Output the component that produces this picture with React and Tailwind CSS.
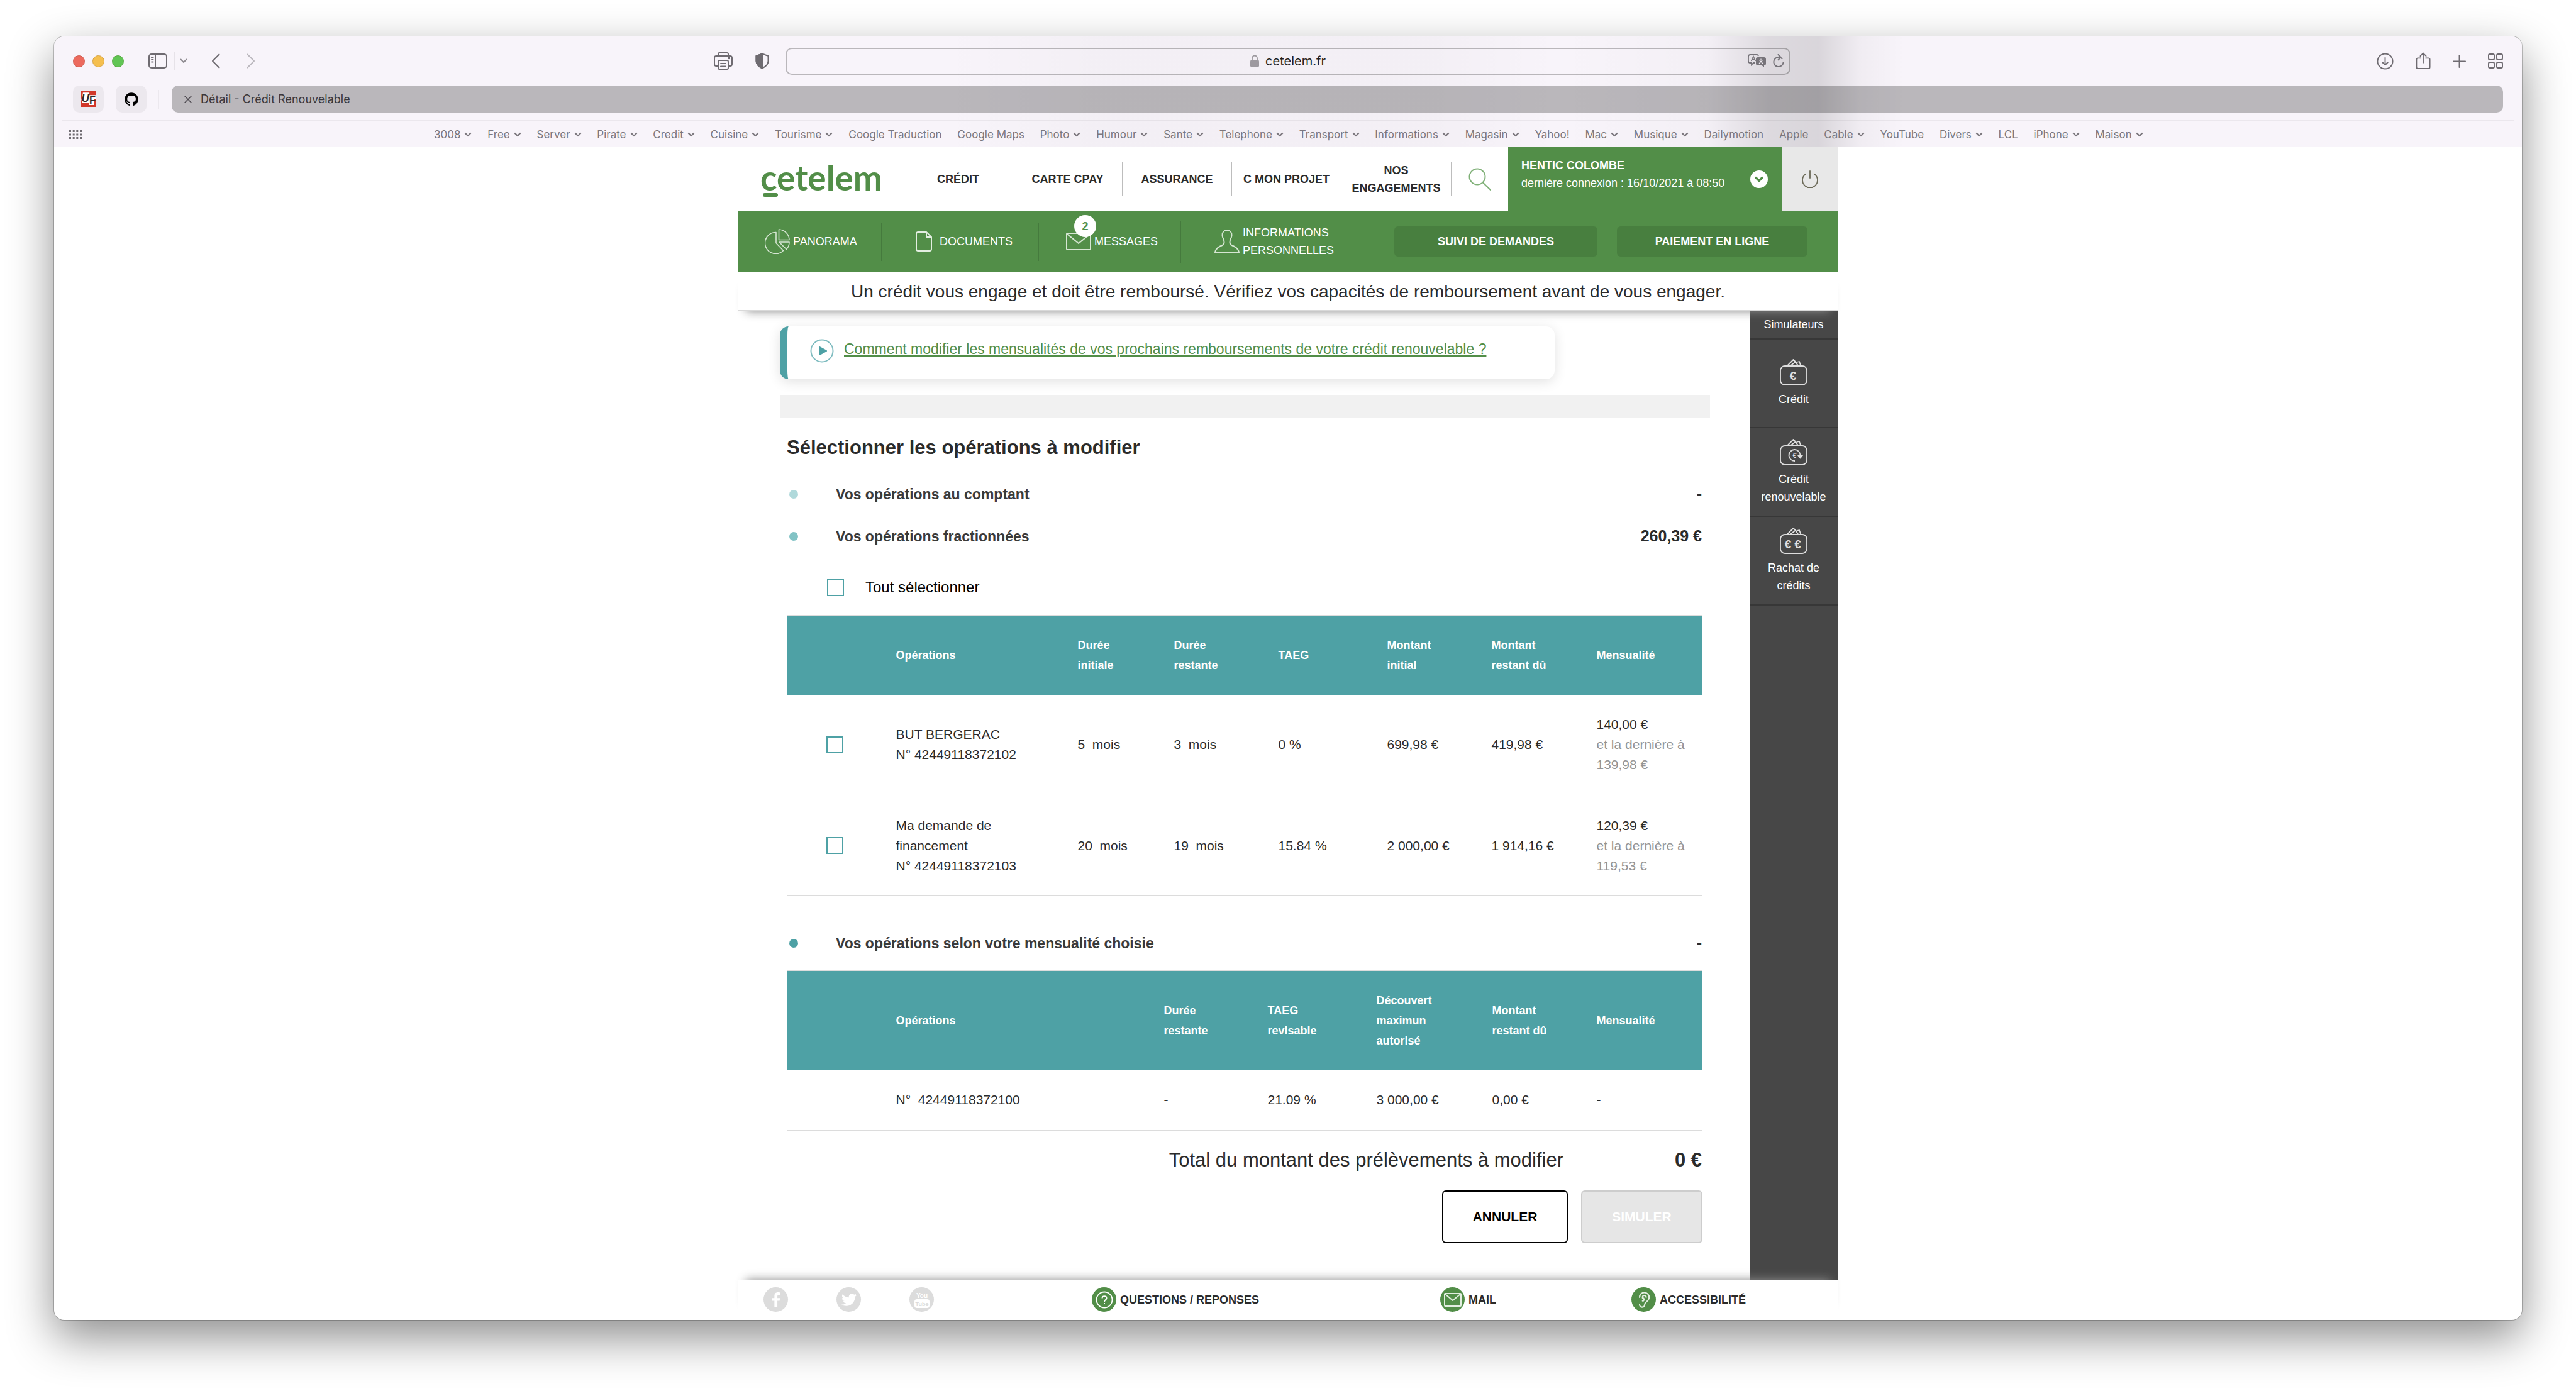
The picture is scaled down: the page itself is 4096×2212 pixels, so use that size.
import React from "react";
import { FaFacebookF, FaTwitter, FaGithub } from "react-icons/fa";
import { Ear, ChevronDown } from "lucide-react";

const SANS = "font-['Liberation_Sans',Arial,sans-serif]";

const bookmarks = [
  ["3008", true],
  ["Free", true],
  ["Server", true],
  ["Pirate", true],
  ["Credit", true],
  ["Cuisine", true],
  ["Tourisme", true],
  ["Google Traduction", false],
  ["Google Maps", false],
  ["Photo", true],
  ["Humour", true],
  ["Sante", true],
  ["Telephone", true],
  ["Transport", true],
  ["Informations", true],
  ["Magasin", true],
  ["Yahoo!", false],
  ["Mac", true],
  ["Musique", true],
  ["Dailymotion", false],
  ["Apple", false],
  ["Cable", true],
  ["YouTube", false],
  ["Divers", true],
  ["LCL", false],
  ["iPhone", true],
  ["Maison", true],
];

function Line({ box, className, width = 2, children }) {
  return (
    <svg
      viewBox={box}
      className={className}
      fill="none"
      stroke="currentColor"
      strokeWidth={width}
      strokeLinecap="round"
      strokeLinejoin="round"
      aria-hidden="true"
    >
      {children}
    </svg>
  );
}

function IconButton({ label, className = "", children }) {
  return (
    <button type="button" aria-label={label} className={`block shrink-0 ${className}`}>
      {children}
    </button>
  );
}

function Toolbar() {
  return (
    <div className="grid h-[78px] grid-cols-[1fr_minmax(0,1598px)_1fr] items-center">
      <div className="flex items-center pl-[30px] pr-[26px]">
        <div className="flex gap-3">
          <button type="button" aria-label="Fermer" className="size-[19px] rounded-full border border-[#d05c50] bg-[#ec6a5e]" />
          <button type="button" aria-label="Réduire" className="size-[19px] rounded-full border border-[#d5a243] bg-[#f5bf4f]" />
          <button type="button" aria-label="Agrandir" className="size-[19px] rounded-full border border-[#58a942] bg-[#61c554]" />
        </div>
        <IconButton label="Barre latérale" className="ml-[39px]">
          <Line box="0 0 30 24" className="h-6 w-[30px]">
            <rect x="1" y="1" width="28" height="22" rx="4" />
            <path d="M11 1v22M5 6.500h2.500M5 10h2.500M5 13.500h2.500" />
          </Line>
        </IconButton>
        <div className="ml-[11px] h-7 w-px bg-[#e6e2e8]" />
        <IconButton label="Groupes d’onglets" className="ml-2">
          <Line box="0 0 12 8" className="h-2 w-3 text-[#8f8b91]">
            <path d="M1.500 1.500 6 6l4.500-4.500" />
          </Line>
        </IconButton>
        <IconButton label="Page précédente" className="ml-[38px]">
          <Line box="0 0 14 24" className="h-6 w-3.5">
            <path d="M12.500 1.500 2 12l10.500 10.500" />
          </Line>
        </IconButton>
        <IconButton label="Page suivante" className="ml-[42px]">
          <Line box="0 0 14 24" className="h-6 w-3.5 text-[#bab6bc]">
            <path d="M1.500 1.500 12 12 1.500 22.500" />
          </Line>
        </IconButton>
        <div className="flex-1" />
        <IconButton label="Imprimer">
          <Line box="0 0 30 28" className="h-7 w-[30px]">
            <path d="M7 6V3a2 2 0 0 1 2-2h12a2 2 0 0 1 2 2v3" />
            <path d="M7 22H4a3 3 0 0 1-3-3V9a3 3 0 0 1 3-3h22a3 3 0 0 1 3 3v10a3 3 0 0 1-3 3h-3" />
            <rect x="7" y="13" width="16" height="14" rx="2" />
            <path d="M11 18h8M11 22.500h8" />
            <circle cx="24" cy="9.500" r="0.700" />
          </Line>
        </IconButton>
        <IconButton label="Rapport de confidentialité" className="ml-9">
          <Line box="0 0 22 26" className="h-[26px] w-[22px]">
            <path d="M11 1.500 20.500 5v8c0 5-4 9-9.500 11.500C5.500 22 1.500 18 1.500 13V5z" />
            <path d="M11 1.500V24.500C5.500 22 1.500 18 1.500 13V5z" fill="currentColor" />
          </Line>
        </IconButton>
      </div>

      <div className="grid h-[43px] grid-cols-[1fr_auto_1fr] items-center rounded-[10px] border-2 border-black/25 px-2">
        <span />
        <div className="flex items-center gap-2.5">
          <svg viewBox="0 0 14 20" className="h-5 w-3.5 text-[#9d999f]" fill="none" stroke="currentColor" strokeWidth="1.800" aria-hidden="true">
            <path d="M3 9V5.500a4 4 0 0 1 8 0V9" />
            <rect x="0" y="8.500" width="14" height="11" rx="2" fill="currentColor" stroke="none" />
          </svg>
          <input
            type="text"
            aria-label="Adresse"
            defaultValue="cetelem.fr"
            className="field-sizing-content bg-transparent text-[20px] leading-6 text-[#1f1e20] outline-none"
          />
        </div>
        <div className="flex items-center justify-end gap-2.5 text-[#77747a]">
          <IconButton label="Traduire">
            <svg viewBox="0 0 30 22" className="h-[22px] w-[30px]" fill="none" stroke="currentColor" strokeWidth="1.800" aria-hidden="true">
              <path d="M12 14H9l-3 3v-3H4a3 3 0 0 1-3-3V4a3 3 0 0 1 3-3h10a3 3 0 0 1 3 2" />
              <path d="M5.500 11 9 3.500 12.500 11M6.800 8.500h4.400" strokeWidth="1.400" />
              <path d="M16 5h10a3 3 0 0 1 3 3v7a3 3 0 0 1-3 3v3l-3.500-3H16a3 3 0 0 1-3-3V8a3 3 0 0 1 3-3z" fill="currentColor" stroke="none" />
              <path d="M17 9.500h8M21 7.500v2M18 15l5.500-5.500M18.500 9.500 24 15" stroke="#efebf1" strokeWidth="1.200" />
            </svg>
          </IconButton>
          <IconButton label="Actualiser">
            <Line box="0 0 18 22" className="h-[22px] w-[18px]">
              <path d="M14.500 7.200A7.600 7.600 0 1 0 16.600 13M8.500 1l4 4-4 4.200" />
            </Line>
          </IconButton>
        </div>
      </div>

      <div className="flex items-center justify-end gap-[35px] pr-[30px]">
        <IconButton label="Téléchargements">
          <Line box="0 0 28 28" className="size-[27px]">
            <circle cx="14" cy="14" r="12.500" />
            <path d="M14 8v12M9.500 15.500 14 20l4.500-4.500" />
          </Line>
        </IconButton>
        <IconButton label="Partager">
          <Line box="0 0 26 30" className="h-7 w-6">
            <path d="M8.500 10H4a2.500 2.500 0 0 0-2.500 2.500v13A2.500 2.500 0 0 0 4 28h18a2.500 2.500 0 0 0 2.500-2.500v-13A2.500 2.500 0 0 0 22 10h-4.500" />
            <path d="M13 18V1.500M8 6.500l5-5 5 5" />
          </Line>
        </IconButton>
        <IconButton label="Nouvel onglet">
          <Line box="0 0 22 22" className="size-[21px]">
            <path d="M11 1v20M1 11h20" />
          </Line>
        </IconButton>
        <IconButton label="Vue d’ensemble des onglets">
          <Line box="0 0 24 24" className="size-6">
            <rect x="1" y="1" width="9" height="9" rx="2" />
            <rect x="14" y="1" width="9" height="9" rx="2" />
            <rect x="1" y="14" width="9" height="9" rx="2" />
            <rect x="14" y="14" width="9" height="9" rx="2" />
          </Line>
        </IconButton>
      </div>
    </div>
  );
}

function TabBar() {
  return (
    <div className="flex h-[43px] items-center px-[30px]">
      <button type="button" aria-label="Onglet UF" className="flex h-full w-[49px] items-center justify-center rounded-[10px] bg-[#ece8ee]">
        <svg viewBox="0 0 32 32" className="size-[25px]" aria-hidden="true">
          <rect width="32" height="32" fill="#d2382a" />
          <path d="M5 3h13v5h13v8h-3v12H17v-5H3l-1-6z" fill="#fff" />
          <g fontFamily="Liberation Sans, sans-serif" fontWeight="700" fill="#2d2a2c">
            <text x="2" y="22" fontSize="22" fontStyle="italic">U</text>
            <text x="18" y="26" fontSize="21">F</text>
          </g>
        </svg>
      </button>
      <button type="button" aria-label="Onglet GitHub" className="ml-[19px] flex h-full w-[49px] items-center justify-center rounded-[10px] bg-[#ece8ee]">
        <FaGithub className="size-[22px] text-black" />
      </button>
      <div className="ml-[18px] h-[30px] w-0.5 bg-[#ece8ee]" />
      <div className="ml-5 flex h-full flex-1 items-center rounded-[10px] bg-black/25 pl-5">
        <IconButton label="Fermer l’onglet">
          <Line box="0 0 12 12" className="size-3 text-[#4f4b51]" width={1.6}>
            <path d="m1 1 10 10M11 1 1 11" />
          </Line>
        </IconButton>
        <span className="ml-3.5 text-[18px] leading-6 text-[#3a373c]">Détail - Crédit Renouvelable</span>
      </div>
    </div>
  );
}

function Bookmarks() {
  return (
    <div className="grid h-[41px] grid-cols-[1fr_minmax(0,2720px)_1fr] items-center">
      <IconButton label="Afficher les favoris" className="ml-6 w-5">
        <svg viewBox="0 0 20 14" className="h-3.5 w-5" fill="currentColor" aria-hidden="true">
          {[0, 5.5, 11].map((y) => [0, 5.7, 11.3, 17].map((x) => <rect key={`${x}-${y}`} x={x} y={y} width="3" height="3" />))}
        </svg>
      </IconButton>
      <nav className="flex items-center justify-between pl-0.5 text-[17px] leading-6 text-[#7b777d]">
        {bookmarks.map(([name, menu]) => (
          <a key={name} href="#" className="flex items-center gap-1.5 whitespace-nowrap">
            {name}
            {menu && (
              <Line box="0 0 12 8" className="h-2 w-3" width={2.4}>
                <path d="M2 2l4 4 4-4" />
              </Line>
            )}
          </a>
        ))}
      </nav>
      <span />
    </div>
  );
}

function NavItem({ className = "", children }) {
  return (
    <a href="#" className={`flex w-[174px] items-center justify-center text-center ${className}`}>
      {children}
    </a>
  );
}

function SiteHeader() {
  return (
    <header className="flex h-[101px] text-[18px] leading-7">
      <a href="#" aria-label="cetelem" className="ml-[35px] mt-5 flex w-[228px] flex-col font-['Lato',sans-serif] text-[55px] font-bold leading-[56px] text-[#528e48]">
        cetelem
        <span className="-mt-[3px] ml-1 block h-1.5 w-6 rounded-full bg-[#528e48]" />
      </a>
      <nav className="my-[23px] flex h-[55px] divide-x divide-[#bdbdbd] border-r border-[#bdbdbd] font-bold text-[#2b2b2b]">
        <NavItem>CRÉDIT</NavItem>
        <NavItem>CARTE CPAY</NavItem>
        <NavItem>ASSURANCE</NavItem>
        <NavItem className="whitespace-nowrap">C MON PROJET</NavItem>
        <NavItem>
          NOS
          <br />
          ENGAGEMENTS
        </NavItem>
      </nav>
      <button type="button" aria-label="Rechercher" className="flex flex-1 items-center justify-center text-[#7fb077]">
        <Line box="0 0 36 36" className="size-9">
          <circle cx="14" cy="14" r="12.500" />
          <path d="m22.500 23 12.500 12" />
        </Line>
      </button>
      <div className="flex w-[435px] bg-[#528e48] pl-[21px] text-white">
        <div className="flex-1 whitespace-nowrap pt-[15px]">
          <div className="font-bold">HENTIC COLOMBE</div>
          <div>dernière connexion : 16/10/2021 à 08:50</div>
        </div>
        <button type="button" aria-label="Menu du compte" className="mr-[22px] flex size-7 items-center justify-center self-center rounded-full bg-white text-[#528e48]">
          <ChevronDown className="size-5" strokeWidth={4} />
        </button>
      </div>
      <button type="button" aria-label="Déconnexion" className="flex w-[89px] items-center justify-center bg-[#e8e8e8] text-[#6b6957]">
        <Line box="0 0 28 28" className="size-7" width={1.8}>
          <path d="M7.500 5.500a12 12 0 1 0 13 0M14 1v11" />
        </Line>
      </button>
    </header>
  );
}

function GreenBar() {
  return (
    <nav className="flex h-[98px] items-center bg-[#528e48] text-[18px] leading-7 text-white">
      <a href="#" className="flex h-[61px] w-[228px] items-center gap-[5px] border-r border-[#457a3d] pl-[42px]">
        <Line box="0 0 40 40" className="size-10 text-[#d6e6d3]" width={1.6}>
          <path d="M18 5.500A17 17 0 1 0 29.500 34.500L18 22.500z" />
          <path d="M22.500 1v16.500H39A17 17 0 0 0 22.500 1z" />
          <path d="M23 21h16a17 17 0 0 1-4.500 11.500z" />
        </Line>
        PANORAMA
      </a>
      <a href="#" className="flex h-[61px] w-[250px] items-center gap-3 border-r border-[#457a3d] pl-[54px]">
        <Line box="0 0 26 32" className="h-8 w-[26px] text-[#e3eee1]">
          <path d="M4 1h13l8 8v19a3 3 0 0 1-3 3H4a3 3 0 0 1-3-3V4a3 3 0 0 1 3-3zM17 1v8h8" />
        </Line>
        DOCUMENTS
      </a>
      <a href="#" className="flex h-[67px] w-[226px] items-center gap-[5px] border-r border-[#457a3d] pl-[43px]">
        <span className="relative">
          <Line box="0 0 40 28" className="h-7 w-10 text-[#d6e6d3]">
            <rect x="1" y="1" width="38" height="26" rx="1" />
            <path d="m1.500 2 18.500 15L38.500 2" />
          </Line>
          <span className="absolute -top-7 left-[13px] flex size-[35px] items-center justify-center rounded-full bg-white font-bold text-[#528e48]">
            2
          </span>
        </span>
        MESSAGES
      </a>
      <a href="#" className="flex flex-1 items-center gap-[5px] pl-[53px]">
        <Line box="0 0 40 40" className="size-10 text-[#d6e6d3]">
          <path d="M20 2c-5 0-7.500 3.500-7.500 8 0 3 .8 4.500 2 6.500.8 1.500 1 3 1 5 0 2-1 3.500-3 4.500C6 29 1.500 31.500 1 38h38c-.5-6.500-5-9-11.500-12-2-1-3-2.500-3-4.500 0-2 .2-3.500 1-5 1.200-2 2-3.500 2-6.500 0-4.500-2.500-8-7.500-8z" />
        </Line>
        <span>
          INFORMATIONS
          <br />
          PERSONNELLES
        </span>
      </a>
      <button type="button" className="h-12 w-[323px] rounded-md bg-[#487f3f] font-bold">SUIVI DE DEMANDES</button>
      <button type="button" className="ml-[31px] mr-[48px] h-12 w-[303px] rounded-md bg-[#487f3f] font-bold">PAIEMENT EN LIGNE</button>
    </nav>
  );
}

function Wallet({ children }) {
  return (
    <svg viewBox="0 0 44 42" className="h-[42px] w-11 text-[#dedede]" fill="none" stroke="currentColor" strokeWidth="1.800" strokeLinejoin="round" aria-hidden="true">
      <rect x="1" y="11" width="42" height="30" rx="7" />
      <path d="M12 10.500 21.500 1l5 5M17 10.500l8-6 4 6M27 5l4-1 2.500 7" />
      {children}
    </svg>
  );
}

function Euro({ x }) {
  return (
    <text x={x} y="33" textAnchor="middle" fontFamily="Liberation Sans, sans-serif" fontWeight="700" fontSize="19" fill="currentColor" stroke="none">
      €
    </text>
  );
}

function Simulators() {
  const cell = "flex h-[141px] flex-col items-center justify-center gap-2 border-b-2 border-[#373737] text-center";
  return (
    <aside className="w-[140px] shrink-0 bg-[#474747] text-[18px] leading-7 text-white">
      <div className="h-[45px] border-b-2 border-[#373737] pt-[7px] text-center">Simulateurs</div>
      <a href="#" className={cell}>
        <Wallet>
          <Euro x={21} />
        </Wallet>
        Crédit
      </a>
      <a href="#" className={cell}>
        <Wallet>
          <path d="M24 35a9 9 0 1 1 8.500-9" />
          <path d="M29 26h7l-3.500 4.500z" fill="currentColor" />
          <text x="23.5" y="30" textAnchor="middle" fontFamily="Liberation Sans, sans-serif" fontWeight="700" fontSize="11" fill="currentColor" stroke="none">
            €
          </text>
        </Wallet>
        <span>
          Crédit
          <br />
          renouvelable
        </span>
      </a>
      <a href="#" className={cell}>
        <Wallet>
          <Euro x={13} />
          <Euro x={28.5} />
        </Wallet>
        <span>
          Rachat de
          <br />
          crédits
        </span>
      </a>
    </aside>
  );
}

function Section({ dot, title, amount, className }) {
  return (
    <div className={`ml-[15px] mr-[13px] flex h-8 items-center ${className}`}>
      <span className={`size-3.5 rounded-full ${dot}`} />
      <h3 className="ml-[60px] flex-1 text-[23px] font-bold text-[#3a3a3a]">{title}</h3>
      <span className="text-[25px] font-bold text-[#2b2b2b]">{amount}</span>
    </div>
  );
}

function Check({ label, id }) {
  return (
    <input
      type="checkbox"
      id={id}
      aria-label={label}
      className="block size-[27px] shrink-0 appearance-none border-2 border-[#4ea1a5] bg-white checked:bg-[#4ea1a5]"
    />
  );
}

const th = "pl-[22px] text-left align-middle font-bold";
const td = "pl-[22px] align-middle";
const tableClass = "ml-[11px] w-[1456px] max-w-full table-fixed border-collapse border border-[#dcdcdc] leading-8";

function Installments() {
  const rows = [
    { id: "102", name: ["BUT BERGERAC", "N° 42449118372102"], cells: ["5\u00a0 mois", "3\u00a0 mois", "0 %", "699,98 €", "419,98 €"], monthly: "140,00 €", last: "139,98 €" },
    { id: "103", name: ["Ma demande de", "financement", "N° 42449118372103"], cells: ["20\u00a0 mois", "19\u00a0 mois", "15.84 %", "2 000,00 €", "1 914,16 €"], monthly: "120,39 €", last: "119,53 €" },
  ];
  return (
    <table className={`${tableClass} mt-7`}>
      <colgroup>
        <col className="w-[151px]" />
        <col />
        <col className="w-[153px]" />
        <col className="w-[166px]" />
        <col className="w-[173px]" />
        <col className="w-[166px]" />
        <col className="w-[167px]" />
        <col className="w-[190px]" />
      </colgroup>
      <thead>
        <tr className="h-[126px] bg-[#4ea1a5] text-[18px] text-white">
          <td />
          <th className={th}>Opérations</th>
          <th className={th}>Durée<br />initiale</th>
          <th className={th}>Durée<br />restante</th>
          <th className={th}>TAEG</th>
          <th className={th}>Montant<br />initial</th>
          <th className={th}>Montant<br />restant dû</th>
          <th className={th}>Mensualité</th>
        </tr>
      </thead>
      <tbody className="text-[21px] text-[#2b2b2b]">
        {rows.map((row, i) => {
          const rule = i === 0 ? "border-b border-[#dcdcdc]" : "";
          return (
            <tr key={row.id} className="h-40">
              <td className="pl-[62px]">
                <Check label={row.name.join(" ")} id={row.id} />
              </td>
              <td className={`${td} ${rule}`}>
                {row.name.map((part) => (
                  <div key={part}>{part}</div>
                ))}
              </td>
              {row.cells.map((cell, j) => (
                <td key={j} className={`${td} ${rule}`}>{cell}</td>
              ))}
              <td className={`${td} ${rule}`}>
                <div>{row.monthly}</div>
                <div className="text-[#949494]">et la dernière à</div>
                <div className="text-[#949494]">{row.last}</div>
              </td>
            </tr>
          );
        })}
      </tbody>
    </table>
  );
}

function Revolving() {
  return (
    <table className={`${tableClass} mt-[27px]`}>
      <colgroup>
        <col className="w-[151px]" />
        <col />
        <col className="w-[165px]" />
        <col className="w-[173px]" />
        <col className="w-[184px]" />
        <col className="w-[166px]" />
        <col className="w-[190px]" />
      </colgroup>
      <thead>
        <tr className="h-[158px] bg-[#4ea1a5] text-[18px] text-white">
          <td />
          <th className={th}>Opérations</th>
          <th className={th}>Durée<br />restante</th>
          <th className={th}>TAEG<br />revisable</th>
          <th className={th}>Découvert<br />maximun<br />autorisé</th>
          <th className={th}>Montant<br />restant dû</th>
          <th className={th}>Mensualité</th>
        </tr>
      </thead>
      <tbody className="text-[21px] text-[#2b2b2b]">
        <tr className="h-24">
          <td />
          <td className={td}>N°{"\u00a0 "}42449118372100</td>
          <td className={td}>-</td>
          <td className={td}>21.09 %</td>
          <td className={td}>3 000,00 €</td>
          <td className={td}>0,00 €</td>
          <td className={td}>-</td>
        </tr>
      </tbody>
    </table>
  );
}

function Operations() {
  return (
    <main className="flex-1 pb-[58px] pl-[66px] pr-[63px] pt-6">
      <div className="flex h-[84px] w-[1232px] max-w-full rounded-[14px] border-l-12 border-[#4ea1a5] bg-white pl-9 shadow-[0_4px_20px_rgba(0,0,0,0.12)]">
        <Line box="0 0 38 38" className="mt-5 size-[38px] text-[#7fbcc0]">
          <circle cx="19" cy="19" r="17.500" />
          <path d="M15 13v12l11-6z" fill="#4ea1a5" stroke="#4ea1a5" />
        </Line>
        <a href="#" className="ml-4 mt-5 h-8 text-[23px] leading-8 text-[#528e48] underline">
          Comment modifier les mensualités de vos prochains remboursements de votre crédit renouvelable ?
        </a>
      </div>
      <div className="mt-[25px] h-9 bg-[#f1f1f1]" />
      <h2 className="ml-[11px] mt-[30px] text-[31px] font-bold leading-9 text-[#2b2b2b]">Sélectionner les opérations à modifier</h2>
      <Section className="mt-10" dot="bg-[#b0d9db]" title="Vos opérations au comptant" amount="-" />
      <Section className="mt-[35px]" dot="bg-[#82c3c5]" title="Vos opérations fractionnées" amount="260,39 €" />
      <div className="ml-[75px] mt-[49px] flex h-8 items-center gap-[34px]">
        <Check label="Tout sélectionner" id="all" />
        <label htmlFor="all" className="text-[24px] text-black">Tout sélectionner</label>
      </div>
      <Installments />
      <Section className="mt-[59px]" dot="bg-[#4ea1a5]" title="Vos opérations selon votre mensualité choisie" amount="-" />
      <Revolving />
      <div className="mr-[13px] mt-[27px] flex justify-end text-[31px] leading-10 text-[#2b2b2b]">
        <span>Total du montant des prélèvements à modifier</span>
        <span className="w-[220px] text-right font-bold">0 €</span>
      </div>
      <div className="mr-3 mt-7 flex justify-end gap-[21px] text-[21px] font-bold">
        <button type="button" className="h-[84px] w-[200px] rounded-md border-2 border-black bg-white text-black">ANNULER</button>
        <button type="button" disabled className="h-[84px] w-[193px] rounded-md border-2 border-[#cdcdcd] bg-[#e6e6e6] text-white">SIMULER</button>
      </div>
    </main>
  );
}

function Disc({ className, children }) {
  return <span className={`flex size-[39px] shrink-0 items-center justify-center rounded-full ${className}`}>{children}</span>;
}

function Footer() {
  const link = "flex items-center gap-1.5";
  return (
    <footer className="relative grid h-[63px] grid-cols-[562fr_554fr_304fr_328fr] items-center bg-white text-[18px] font-bold leading-7 text-[#2b2b2b] shadow-[0_-12px_16px_-12px_#8c8c8c]">
      <div className="flex gap-[77px] pl-10">
        <a href="#" aria-label="Facebook">
          <Disc className="bg-[#dcdcdc] text-white">
            <FaFacebookF className="size-6" />
          </Disc>
        </a>
        <a href="#" aria-label="Twitter">
          <Disc className="bg-[#dcdcdc] text-white">
            <FaTwitter className="size-6" />
          </Disc>
        </a>
        <a href="#" aria-label="YouTube">
          <Disc className="bg-[#dcdcdc] text-white">
            <svg viewBox="0 0 26 28" className="h-7 w-[26px]" fontFamily="Liberation Sans, sans-serif" fontWeight="700" textAnchor="middle" aria-hidden="true">
              <text x="13" y="11" fontSize="10" fill="#fff">You</text>
              <rect x="1" y="13" width="24" height="14" rx="4" fill="#fff" />
              <text x="13" y="24" fontSize="9" fill="#dcdcdc">Tube</text>
            </svg>
          </Disc>
        </a>
      </div>
      <a href="#" className={link}>
        <Disc className="bg-[#528e48] text-white">
          <svg viewBox="0 0 28 28" className="size-7" fill="none" stroke="currentColor" strokeWidth="1.800" aria-hidden="true">
            <circle cx="14" cy="14" r="12.500" />
            <path d="M10.500 11.500c0-4.500 7-4.500 7 0 0 2.500-3.500 2.500-3.500 5.500M14 19v2" strokeWidth="2" />
          </svg>
        </Disc>
        QUESTIONS / REPONSES
      </a>
      <a href="#" className={link}>
        <Disc className="bg-[#528e48] text-[#e3eee1]">
          <Line box="0 0 28 22" className="h-[22px] w-7">
            <rect x="1" y="1" width="26" height="20" rx="1" />
            <path d="m2 2 12 10L26 2" />
          </Line>
        </Disc>
        MAIL
      </a>
      <a href="#" className={link}>
        <Disc className="bg-[#528e48] text-[#e3eee1]">
          <Ear className="size-7" strokeWidth={1.8} />
        </Disc>
        ACCESSIBILITÉ
      </a>
    </footer>
  );
}

export default function App() {
  return (
    <div className="flex min-h-screen flex-col bg-white px-[86px] pb-[113px] pt-[58px]">
      <div className="flex-1 rounded-2xl bg-white shadow-[0_0_0_1px_rgba(0,0,0,0.22),0_28px_72px_rgba(0,0,0,0.45)]">
        <div className="overflow-hidden rounded-2xl">
          <div className="bg-[#f8f4fa] bg-[linear-gradient(90deg,transparent_36%,rgba(0,0,0,0.02)_42%,rgba(0,0,0,0.02)_56%,transparent_61%,rgba(0,0,0,0.02)_67%,rgba(0,0,0,0.11)_69.500%,rgba(0,0,0,0.125)_71.500%,rgba(0,0,0,0.03)_73.200%,transparent_75%)] font-['Inter',sans-serif] text-[#6f6b71]">
            <Toolbar />
            <TabBar />
            <div className="mx-3 mt-3 h-0.5 bg-black/5" />
            <Bookmarks />
          </div>
          <div className={`mx-auto max-w-[1748px] ${SANS}`}>
            <SiteHeader />
            <GreenBar />
            <p className="relative h-[62px] border-b-2 border-[#d9d9d9] bg-white text-center text-[28px] leading-[62px] text-[#2b2b2b] shadow-[0_12px_16px_-12px_#8c8c8c]">
              Un crédit vous engage et doit être remboursé. Vérifiez vos capacités de remboursement avant de vous engager.
            </p>
            <div className="flex">
              <Operations />
              <Simulators />
            </div>
            <Footer />
          </div>
        </div>
      </div>
    </div>
  );
}
